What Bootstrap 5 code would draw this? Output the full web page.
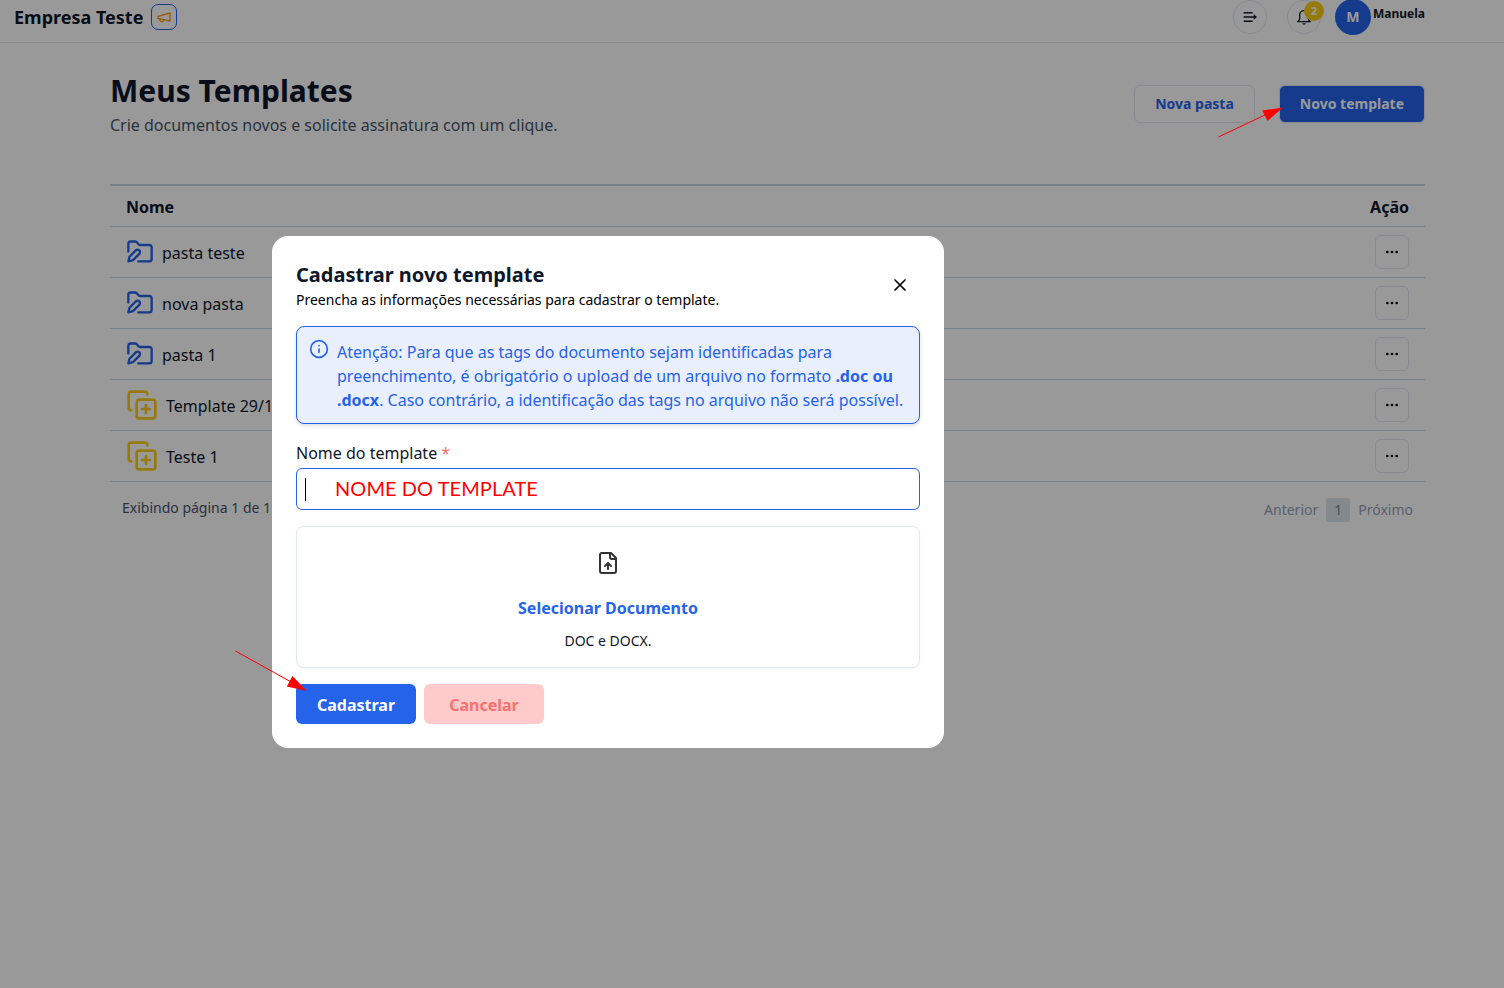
<!DOCTYPE html>
<html lang="pt-BR">
<head>
<meta charset="utf-8">
<meta name="viewport" content="width=device-width, initial-scale=1">
<title>Meus Templates</title>
<link href="https://cdn.jsdelivr.net/npm/bootstrap@5.3.0/dist/css/bootstrap.min.css" rel="stylesheet">
<style>
  :root { --brand: #2563eb; --ink: #0f172a; --line: #cbd5e1; --soft: #e2e8f0; --gold: #facc15; }
  body { font-family: "Noto Sans", sans-serif; color: var(--ink); background: #fff; height: 988px; overflow: hidden; font-size: 16px; line-height: 24px; }
  svg { display: block; flex: none; }
  .ico { fill: none; stroke: currentColor; stroke-width: 2; stroke-linecap: round; stroke-linejoin: round; }
  .topbar { height: 43px; border-bottom: 1px solid #e5e7eb; padding: 0 79px 8px 14px; }
  .company { font-size: 18px; font-weight: 700; }
  .news { width: 26px; height: 26px; border: 1px solid var(--brand); border-radius: 7px; color: #f59e0b; }
  .round-btn { width: 34px; height: 34px; border: 1px solid var(--soft); }
  .bell { margin: 0 14px 0 20px; }
  .count { width: 20px; height: 20px; top: 0; left: 16px; background: var(--gold); color: #fff; font-size: 11px; font-weight: 700; }
  .avatar { width: 36px; height: 36px; background: var(--brand); color: #fff; font-size: 14px; font-weight: 700; }
  .user { font-size: 12px; font-weight: 700; line-height: 16px; margin: 0 0 7px 2px; }
  .page { padding: 30px 79px 0 110px; }
  h1 { font-size: 30px; font-weight: 700; line-height: 36px; margin: 0 0 4px; }
  .sub { color: #475569; }
  .action { height: 38px; font-size: 14px; font-weight: 700; border: 1px solid var(--soft); border-radius: 6px; padding: 0 20px; line-height: 20px; color: var(--brand); }
  .action-main { background: var(--brand); color: #fff; }
  .grid { margin-top: 47px; border-top: 2px solid var(--line); }
  .grid-head { height: 41px; font-weight: 700; }
  .grid-row { height: 51px; }
  .grid-head, .grid-row { border-bottom: 1px solid var(--line); padding: 0 16px; }
  .grid-head { padding-top: 2px; }
  .name { padding-top: 2px; }
  .more { width: 34px; height: 34px; border: 1px solid var(--soft); border-radius: 6px; color: #000; }
  .foot { font-size: 14px; padding: 16px 12px 0; line-height: 20px; color: #475569; }
  .pager { color: #94a3b8; }
  .cur { background: #dbe4ea; color: #7c8795; width: 24px; height: 24px; border-radius: 3px; margin: 0 8px; }
  .shade { background: rgba(0,0,0,.4); padding: 236px 0 0 272px; }
  .dialog { width: 672px; height: 512px; background: #fff; border-radius: 16px; padding: 24px; }
  .dialog h2 { font-size: 20px; font-weight: 700; line-height: 28px; margin: 1px 0 0; }
  .dialog-head { height: 66px; }
  .close-x { margin: 15px 10px 0 0; color: #000; }
  .hint { font-size: 14px; line-height: 20px; color: #000; margin-top: 1px; }
  .notice { height: 98px; border: 1px solid var(--brand); border-radius: 8px; background: #e9effd; color: var(--brand); padding: 13px 12px 0; box-shadow: 0 2px 4px rgba(0,0,0,.13); }
  .notice svg { margin-top: -1px; }
  .label-line { margin: 17px 0 3px; }
  .req { color: #f87171; }
  .field { height: 42px; border: 1px solid var(--brand); border-radius: 6px; padding-left: 8px; }
  .caret { width: 1px; height: 23px; background: #000; }
  .typed { color: #f00; font-family: Lato, sans-serif; font-size: 20px; letter-spacing: .06px; margin: 0 0 3px 29px; }
  .drop { height: 142px; margin-top: 16px; border: 1px solid var(--soft); border-radius: 8px; box-shadow: 0 1px 2px rgba(0,0,0,.05); padding-top: 24px; }
  .drop svg { color: #333; }
  .pick { color: var(--brand); font-weight: 700; margin-top: 21px; }
  .kinds { font-size: 14px; line-height: 20px; margin-top: 11px; }
  .cta { width: 120px; height: 40px; border: 0; border-radius: 6px; font-weight: 700; padding: 2px 0 0; }
  .cta-main { background: var(--brand); color: #fff; }
  .cta-cancel { background: #fecaca; color: #f87171; }
  .tone-folder { color: var(--brand); }
  .tone-copy { color: var(--gold); }
</style>
</head>
<body>
<svg width="0" height="0" class="position-absolute">
  <symbol id="folder" viewBox="0 0 24 24"><path d="M8.4 10.6a2.1 2.1 0 1 1 2.99 2.98L6 19l-4 1 1-3.9Z"/><path d="M2 11.5V5a2 2 0 0 1 2-2h3.9c.7 0 1.3.3 1.7.9l.8 1.2c.4.6 1 .9 1.7.9H20a2 2 0 0 1 2 2v10a2 2 0 0 1-2 2h-9.5"/></symbol>
  <symbol id="copy" viewBox="0 0 24 24"><path d="M15 12v6M12 15h6"/><rect x="8" y="8" width="14" height="14" rx="2"/><path d="M4 16c-1.1 0-2-.9-2-2V4c0-1.1.9-2 2-2h10c1.1 0 2 .9 2 2"/></symbol>
  <symbol id="dots" viewBox="0 0 24 24"><circle cx="5" cy="12" r="1"/><circle cx="12" cy="12" r="1"/><circle cx="19" cy="12" r="1"/></symbol>
</svg>

<header class="topbar d-flex align-items-center">
  <span class="company">Empresa Teste</span>
  <span class="news d-flex align-items-center justify-content-center ms-2"><svg class="ico" width="16" height="16" viewBox="0 0 24 24"><path d="m3 11 18-5v12L3 14v-3zM11.6 16.8a3 3 0 1 1-5.8-1.6"/></svg></span>
  <span class="round-btn rounded-circle d-flex align-items-center justify-content-center ms-auto"><svg width="16" height="16" viewBox="0 0 24 24" fill="none" stroke="currentColor" stroke-width="2.2"><path d="M2.500 5.500h13.500M2.500 12H20M2.500 18.500h13.500"/><path d="M17.500 8v8l5-4Z" fill="currentColor" stroke="none"/></svg></span>
  <span class="bell round-btn rounded-circle d-flex align-items-center justify-content-center position-relative"><svg class="ico" width="16" height="16" viewBox="0 0 24 24"><path d="M12 2.500c-4 0-6.500 3-6.500 6.500v5.500c0 2-1.500 3-3 4.500h19c-1.500-1.500-3-2.500-3-4.500V9c0-3.500-2.500-6.500-6.500-6.500Z"/><path d="M9.500 21.500h5a2.500 2 0 0 1-5 0Z" fill="currentColor" stroke="none"/></svg><span class="count rounded-circle position-absolute d-flex align-items-center justify-content-center">2</span></span>
  <span class="avatar rounded-circle d-flex align-items-center justify-content-center">M</span>
  <span class="user">Manuela</span>
</header>

<main class="page">
  <div class="d-flex justify-content-between">
    <div><h1>Meus Templates</h1><div class="sub">Crie documentos novos e solicite assinatura com um clique.</div></div>
    <div class="d-flex gap-4 pt-2 mt-1">
      <button class="btn action text-nowrap">Nova pasta</button>
      <button class="btn action action-main text-nowrap">Novo template</button>
    </div>
  </div>
  <div class="grid">
    <div class="grid-head d-flex justify-content-between align-items-center"><span>Nome</span><span>Ação</span></div>
    <div id="rows"></div>
  </div>
  <div class="foot d-flex justify-content-between">
    <span>Exibindo página 1 de 1</span>
    <div class="pager d-flex align-items-center"><span>Anterior</span><span class="cur d-flex align-items-center justify-content-center">1</span><span>Próximo</span></div>
  </div>
</main>

<div class="shade position-fixed top-0 start-0 w-100 h-100">
  <section class="dialog" role="dialog">
    <div class="dialog-head d-flex justify-content-between">
      <div><h2>Cadastrar novo template</h2><div class="hint">Preencha as informações necessárias para cadastrar o template.</div></div>
      <svg class="ico close-x" width="20" height="20" viewBox="0 0 24 24"><path d="M18 6 6 18M6 6l12 12"/></svg>
    </div>
    <div class="notice d-flex">
      <svg class="ico me-2" width="20" height="20" viewBox="0 0 24 24"><circle cx="12" cy="12" r="10"/><path d="M12 16v-4M12 8h.01"/></svg>
      <div class="text-nowrap">Atenção: Para que as tags do documento sejam identificadas para<br>preenchimento, é obrigatório o upload de um arquivo no formato <b>.doc ou</b><br><b>.docx</b>. Caso contrário, a identificação das tags no arquivo não será possível.</div>
    </div>
    <div class="label-line">Nome do template <span class="req">*</span></div>
    <div class="field d-flex align-items-center"><span class="caret"></span><span class="typed">NOME DO TEMPLATE</span></div>
    <div class="drop d-flex flex-column align-items-center">
      <svg class="ico" width="24" height="24" viewBox="0 0 24 24"><path d="M15 2H6a2 2 0 0 0-2 2v16a2 2 0 0 0 2 2h12a2 2 0 0 0 2-2V7ZM14 2v4a2 2 0 0 0 2 2h4M12 12v6M15 15l-3-3-3 3"/></svg>
      <div class="pick">Selecionar Documento</div>
      <div class="kinds">DOC e DOCX.</div>
    </div>
    <div class="d-flex gap-2 mt-3"><button class="btn cta cta-main">Cadastrar</button><button class="btn cta cta-cancel">Cancelar</button></div>
  </section>
</div>
<svg class="position-fixed top-0 start-0" width="1504" height="988" stroke="red" fill="red">
  <path d="M1218.5 137 1266 114.500M235.500 651 292 682.500" fill="none"/>
  <path stroke="none" d="M1283 107.500 1262.300 110.500 1267.500 121ZM306.800 691 292.500 676 286.800 686.500Z"/>
</svg>
<script>
  const items = [["folder", 28, "pasta teste"], ["folder", 28, "nova pasta"], ["folder", 28, "pasta 1"], ["copy", 32, "Template 29/11"], ["copy", 32, "Teste 1"]];
  document.getElementById("rows").innerHTML = items.map(([icon, size, name]) => `
    <div class="grid-row d-flex align-items-center">
      <svg class="ico me-2 tone-${icon}" width="${size}" height="${size}"><use href="#${icon}"/></svg>
      <span class="name">${name}</span>
      <span class="more ms-auto d-flex align-items-center justify-content-center"><svg class="ico" width="16" height="16"><use href="#dots"/></svg></span>
    </div>`).join("");
</script>
<script src="https://cdn.jsdelivr.net/npm/bootstrap@5.3.0/dist/js/bootstrap.bundle.min.js"></script>
</body>
</html>
